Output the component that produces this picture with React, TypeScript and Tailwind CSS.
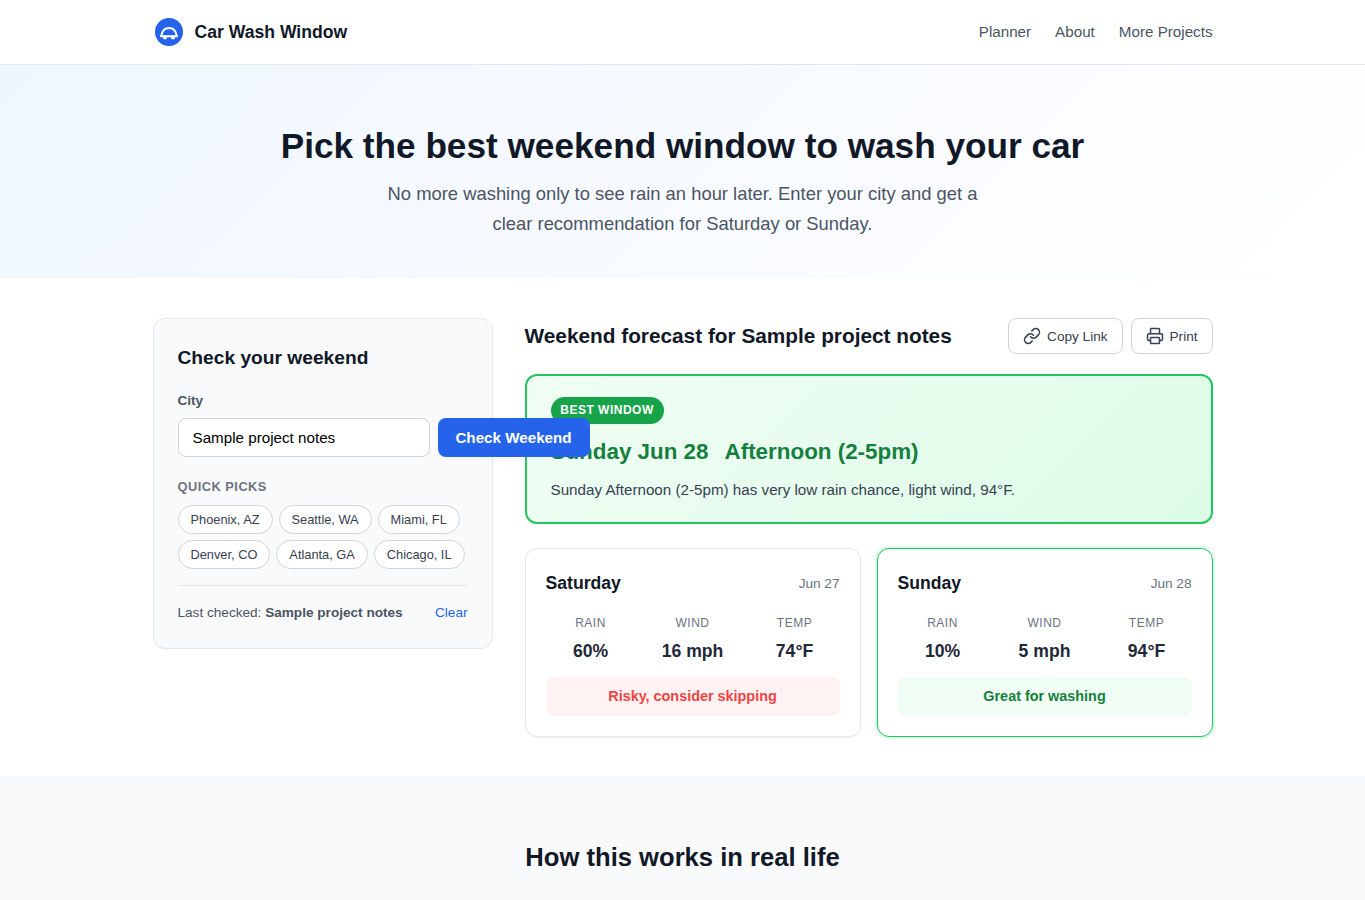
import {Link, Printer} from 'lucide-react'

interface DayForecast {
    name: string
    date: string
    rain: string
    wind: string
    temp: string
    verdict: string
    best: boolean
}

const days: DayForecast[] = [
    {name: 'Saturday', date: 'Jun 27', rain: '60%', wind: '16 mph', temp: '74°F', verdict: 'Risky, consider skipping', best: false},
    {name: 'Sunday', date: 'Jun 28', rain: '10%', wind: '5 mph', temp: '94°F', verdict: 'Great for washing', best: true},
]

const quickPicks = ['Phoenix, AZ', 'Seattle, WA', 'Miami, FL', 'Denver, CO', 'Atlanta, GA', 'Chicago, IL']

const Logo = () => (
    <svg width="28" height="28" viewBox="0 0 28 28" fill="none">
        <circle cx="14" cy="14" r="14" fill="#2563eb" />
        <path d="M6.2 18.2C7 13 10 10 14 10s7 3 7.8 8.2" stroke="#fff" strokeWidth="2" strokeLinecap="round" />
        <path d="M6 18.2h16" stroke="#fff" strokeWidth="2" strokeLinecap="round" />
        <circle cx="10" cy="19.5" r="2" fill="#fff" />
        <circle cx="18" cy="19.5" r="2" fill="#fff" />
    </svg>
)

const Header = () => (
    <header className="h-[65px] border-b border-[#e5e7eb] bg-white">
        <div className="mx-auto flex h-16 w-[1060px] items-center justify-between">
            <div className="flex items-center gap-3 pl-0.5">
                <Logo />
                <span className="text-[17.6px] font-bold text-[#111827]">Car Wash Window</span>
            </div>
            <nav className="flex gap-6 text-[15.2px] text-[#4b5563]">
                <a>Planner</a>
                <a>About</a>
                <a>More Projects</a>
            </nav>
        </div>
    </header>
)

const Hero = () => (
    <section className="h-[213px] bg-[linear-gradient(135deg,#eff6ff_0%,#ffffff_100%)] pt-[60px] text-center">
        <h1 className="text-[35.2px] leading-[42px] font-bold text-[#111827]">Pick the best weekend window to wash your car</h1>
        <p className="mx-auto mt-3 w-[600px] text-[18.4px] leading-[30px] text-[#4b5563]">
            No more washing only to see rain an hour later. Enter your city and get a clear recommendation for Saturday or Sunday.
        </p>
    </section>
)

const SearchPanel = () => (
    <aside className="h-[331px] w-[340px] shrink-0 rounded-xl border border-[#e5e7eb] bg-[#f9fafb] px-6 pt-6">
        <h2 className="text-[19.2px] leading-[30px] font-bold text-[#111827]">Check your weekend</h2>
        <label htmlFor="city" className="mt-[17px] block text-[13.6px] leading-[22px] font-bold text-[#4b5563]">City</label>
        <div className="mt-[6px] flex gap-2">
            <input
                id="city"
                defaultValue="Sample project notes"
                className="h-[39px] w-[252px] shrink-0 rounded-lg border border-[#d1d5db] bg-white px-3.5 text-[15.2px] text-black"
            />
            <button className="relative z-10 h-[39px] w-[152px] shrink-0 rounded-lg bg-[#2563eb] pt-0.5 text-[15.2px] font-bold text-white">
                Check Weekend
            </button>
        </div>
        <h3 className="mt-5 text-[12.8px] leading-5 font-bold tracking-[0.5px] text-[#6b7280]">QUICK PICKS</h3>
        <div className="mt-2 flex flex-wrap gap-1.5">
            {quickPicks.map(city => (
                <button key={city} className="h-[29px] rounded-full border border-[#d1d5db] bg-white px-3 text-[12.8px] text-[#374151]">
                    {city}
                </button>
            ))}
        </div>
        <div className="mt-4 flex justify-between border-t border-[#e5e7eb] pt-4 text-[13.6px] leading-[22px] text-[#4b5563]">
            <p>Last checked: <strong>Sample project notes</strong></p>
            <button className="text-[#2563eb]">Clear</button>
        </div>
    </aside>
)

const BestWindow = () => (
    <div className="mt-5 h-[150px] rounded-xl border-2 border-[#22c55e] bg-[linear-gradient(135deg,#f0fdf4_0%,#dcfce7_100%)] px-6 pt-[21px]">
        <span className="block h-[27px] w-[113px] rounded-full bg-[#16a34a] text-center text-[12px] leading-[27px] font-bold tracking-[0.5px] text-white">
            BEST WINDOW
        </span>
        <p className="mt-[10px] flex gap-4 text-[22.4px] leading-9 font-bold text-[#15803d]">
            <span>Sunday Jun 28</span>
            <span>Afternoon (2-5pm)</span>
        </p>
        <p className="mt-2 text-[15.2px] leading-6 text-[#374151]">Sunday Afternoon (2-5pm) has very low rain chance, light wind, 94°F.</p>
    </div>
)

const Metric = ({label, value}: {label: string; value: string}) => (
    <div className="text-center">
        <p className="text-[12px] leading-5 tracking-[0.5px] text-[#6b7280]">{label}</p>
        <p className="mt-1 text-[17.6px] leading-7 font-bold text-[#1f2937]">{value}</p>
    </div>
)

const DayCard = ({day}: {day: DayForecast}) => (
    <div
        className={`h-[189px] rounded-xl border bg-white px-5 pt-5 ${
            day.best ? 'border-[#22c55e] shadow-[0_0_0_2px_#dcfce7]' : 'border-[#e5e7eb] shadow-[0_1px_2px_rgba(0,0,0,0.05)]'
        }`}
    >
        <div className="flex items-center justify-between">
            <h3 className="text-[17.6px] leading-7 font-bold text-[#111827]">{day.name}</h3>
            <span className="pt-0.5 text-[13.6px] text-[#6b7280]">{day.date}</span>
        </div>
        <div className="mt-4 grid grid-cols-3 gap-3">
            <Metric label="RAIN" value={day.rain} />
            <Metric label="WIND" value={day.wind} />
            <Metric label="TEMP" value={day.temp} />
        </div>
        <p
            className={`mt-3 h-[39px] rounded-lg text-center text-[14.4px] leading-[39px] font-bold ${
                day.best ? 'bg-[#f0fdf4] text-[#15803d]' : 'bg-[#fef2f2] text-[#ef4444]'
            }`}
        >
            {day.verdict}
        </p>
    </div>
)

const actionClass = 'flex h-9 items-center gap-1.5 rounded-lg border border-[#d1d5db] bg-white px-3.5 text-[13.6px] text-[#374151]'

export default function App() {
    return (
        <div className="h-[900px] overflow-hidden bg-white font-['Liberation_Sans',sans-serif]">
            <Header />
            <Hero />
            <main className="mx-auto flex w-[1060px] items-start gap-8 pt-10 pb-[39px]">
                <SearchPanel />
                <section className="w-[688px]">
                    <div className="flex items-center justify-between">
                        <h2 className="text-[20.8px] font-bold text-[#111827]">Weekend forecast for Sample project notes</h2>
                        <div className="flex gap-2">
                            <button className={actionClass}><Link size={18} /><span className="pt-0.5">Copy Link</span></button>
                            <button className={actionClass}><Printer size={18} /><span className="pt-0.5">Print</span></button>
                        </div>
                    </div>
                    <BestWindow />
                    <div className="mt-6 grid grid-cols-2 gap-4">
                        {days.map(day => <DayCard key={day.name} day={day} />)}
                    </div>
                </section>
            </main>
            <section className="h-[124px] bg-[#f9fafb] pt-[61px] text-center">
                <h2 className="text-[25.6px] leading-[41px] font-bold text-[#111827]">How this works in real life</h2>
            </section>
        </div>
    )
}
